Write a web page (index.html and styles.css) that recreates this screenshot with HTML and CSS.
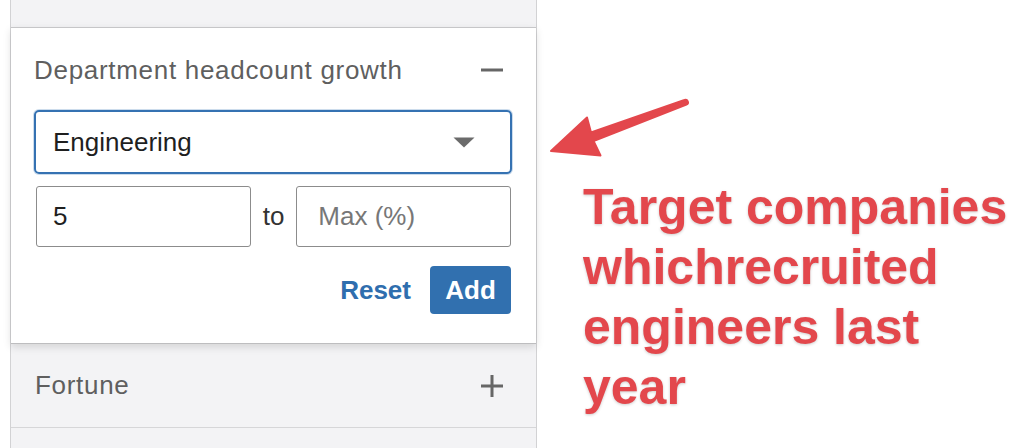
FILE: index.html
```html
<!DOCTYPE html>
<html>
<head>
<meta charset="utf-8">
<link rel="stylesheet" href="styles.css">
</head>
<body>
<div class="page">
  <aside class="panel">
    <div class="strip"></div>
    <section class="card">
      <div class="card-head">
        <span class="card-title">Department headcount growth</span>
        <svg class="toggle" width="24" height="24" viewBox="0 0 24 24"><path d="M1 12H23" stroke="#666" stroke-width="3"/></svg>
      </div>
      <div class="select">
        <span class="select-value">Engineering</span>
        <svg class="caret" width="22" height="11" viewBox="0 0 22 11"><path d="M0.5 0.5H21.5L11 10.5Z" fill="#6b6b6b"/></svg>
      </div>
      <div class="range">
        <div class="field"><span class="field-value">5</span></div>
        <span class="range-to">to</span>
        <div class="field"><span class="field-placeholder">Max (%)</span></div>
      </div>
      <div class="actions">
        <span class="btn-link">Reset</span>
        <span class="btn-primary">Add</span>
      </div>
    </section>
    <div class="row">
      <span class="row-title">Fortune</span>
      <svg class="toggle" width="24" height="24" viewBox="0 0 24 24"><path d="M1 12H23M12 1V23" stroke="#666" stroke-width="3"/></svg>
    </div>
    <div class="row row-last"></div>
  </aside>
  <div class="note">
    <svg class="arrow" width="150" height="64" viewBox="0 0 150 64">
      <path d="M6 54 L42 20.5 L46 35.5 L139.5 3 A2.4 2.4 0 0 1 141.4 7.6 L48.5 44 L55.5 58.5 Z" fill="#e3474c" stroke="#e3474c" stroke-width="2" stroke-linejoin="round"/>
    </svg>
    <p class="note-text">Target companies whichrecruited engineers last year</p>
  </div>
</div>
</body>
</html>
```

FILE: styles.css
```css
* { box-sizing: border-box; }
html, body { margin: 0; padding: 0; background: #fff; }
body { width: 1024px; height: 448px; overflow: hidden; font-family: "Liberation Sans", Arial, sans-serif; }

.page { display: flex; height: 448px; }

.panel {
  margin-left: 10px;
  width: 527px;
  height: 448px;
  background: #f3f3f5;
  border-left: 1px solid #d2d2d4;
  border-right: 1px solid #d2d2d4;
  display: flex;
  flex-direction: column;
  flex-shrink: 0;
}

.strip { height: 27px; flex-shrink: 0; }

.card {
  position: relative;
  background: #fff;
  border-top: 1px solid #c6c6c8;
  border-bottom: 1px solid #bdbdbf;
  box-shadow: 0 3px 8px rgba(0,0,0,0.13);
  padding: 27px 24px 29px 23px;
  display: flex;
  flex-direction: column;
  z-index: 1;
}

.card-head {
  display: flex;
  align-items: center;
  justify-content: space-between;
  height: 30px;
  padding-right: 8px;
}
.card-title { font-size: 26px; color: #5f5f5f; letter-spacing: 0.7px; }

.select {
  margin-top: 25px;
  height: 64px;
  border: 2px solid #3572b2;
  border-radius: 5px;
  box-shadow: 0 0 0 1px rgba(53,114,178,0.25);
  display: flex;
  align-items: center;
  justify-content: space-between;
  padding: 0 35px 0 17px;
}
.select-value { font-size: 26px; color: #1f1f1f; }

.range {
  margin-top: 12px;
  display: flex;
  align-items: center;
  gap: 12px;
  padding: 0 1px 0 2px;
}
.field {
  flex: 1;
  height: 61px;
  border: 1px solid #8c8c8c;
  border-radius: 3px;
  display: flex;
  align-items: center;
  padding-left: 16px;
  font-size: 26px;
}
.field-value { color: #1f1f1f; }
.field-placeholder { color: #777; padding-left: 5px; }
.range-to { font-size: 26px; color: #333; }

.actions {
  margin-top: 19px;
  display: flex;
  justify-content: flex-end;
  align-items: center;
  gap: 19px;
  padding-right: 1px;
}
.btn-link { font-size: 26px; font-weight: bold; color: #2f6eae; }
.btn-primary {
  height: 48px;
  width: 81px;
  background: #3170af;
  border-radius: 4px;
  color: #fff;
  font-size: 26px;
  font-weight: bold;
  display: flex;
  align-items: center;
  justify-content: center;
}

.row {
  height: 84px;
  border-bottom: 1px solid #d6d6d8;
  display: flex;
  align-items: center;
  justify-content: space-between;
  padding: 0 32px 0 24px;
  flex-shrink: 0;
}
.row-title { font-size: 26px; color: #5f5f5f; letter-spacing: 0.7px; }
.row-last { border-bottom: none; flex: 1; }

.note {
  flex: 1;
  display: flex;
  flex-direction: column;
  padding-top: 97px;
  padding-left: 8px;
}
.arrow { display: block; }
.note-text {
  margin: 16px 0 0 38px;
  font-size: 50px;
  line-height: 60px;
  font-weight: bold;
  color: #e3474c;
  text-shadow: 0 1px 3px rgba(0,0,0,0.2);
}
```
